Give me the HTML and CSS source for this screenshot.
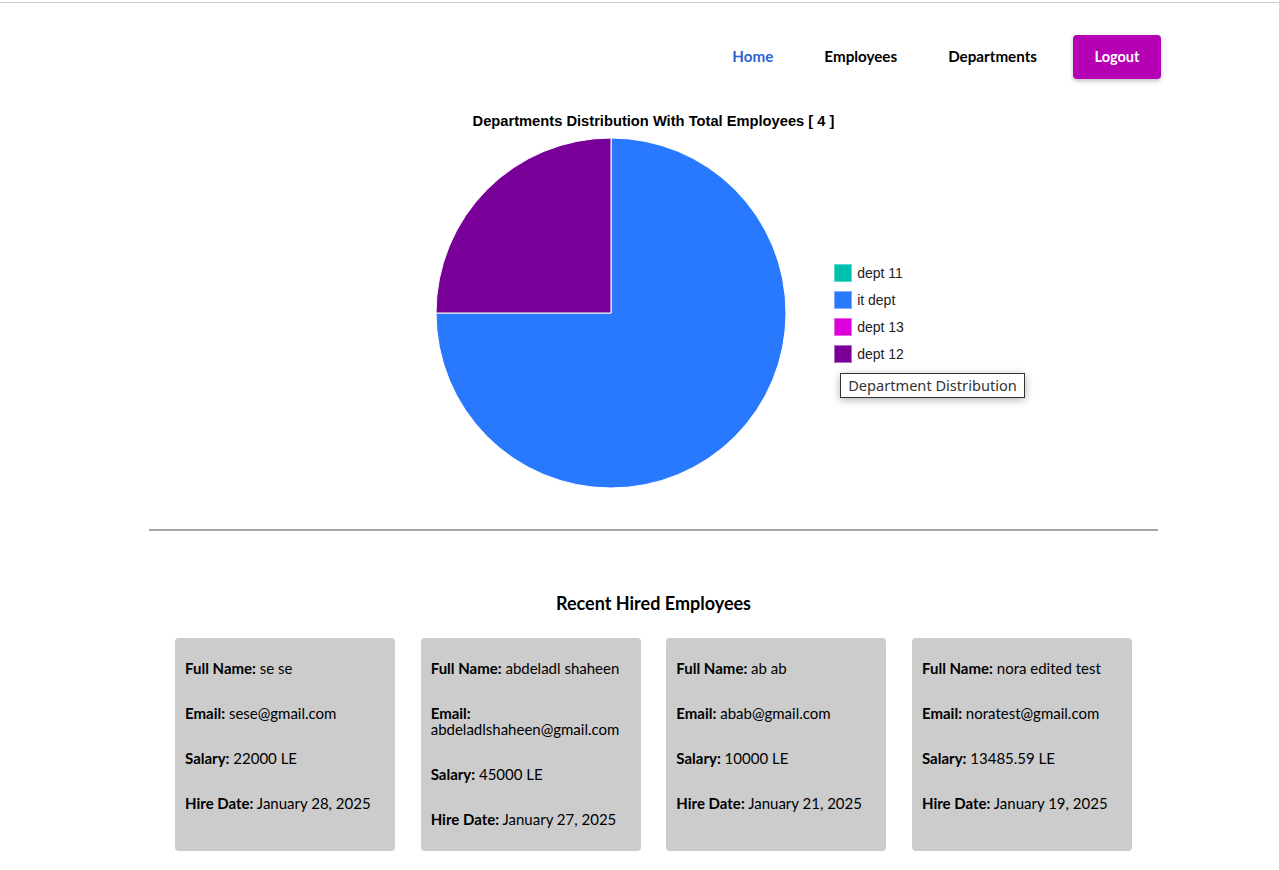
FILE: index.html
```html
<!DOCTYPE html>
<html>
<head>
<meta charset="utf-8">
<link rel="stylesheet" href="styles.css">
</head>
<body>
<div class="topline"></div>
<nav class="nav">
  <a class="nav-link active">Home</a>
  <a class="nav-link">Employees</a>
  <a class="nav-link">Departments</a>
  <button class="logout">Logout</button>
</nav>
<main class="page">
  <section class="chart">
    <h2 class="chart-title">Departments Distribution With Total Employees [ 4 ]</h2>
    <div class="chart-body">
      <svg class="pie" width="352" height="352" viewBox="0 0 352 352">
        <path d="M176,176 L176,1 A175,175 0 1,1 1,176 Z" fill="#2979ff" stroke="#ffffff" stroke-width="1"/>
        <path d="M176,176 L1,176 A175,175 0 0,1 176,1 Z" fill="#780099" stroke="#ffffff" stroke-width="1"/>
      </svg>
      <div class="legend">
        <div class="legend-item"><span class="swatch teal"></span>dept 11</div>
        <div class="legend-item"><span class="swatch blue"></span>it dept</div>
        <div class="legend-item"><span class="swatch magenta"></span>dept 13</div>
        <div class="legend-item"><span class="swatch purple"></span>dept 12</div>
        <div class="tooltip">Department Distribution</div>
      </div>
    </div>
  </section>
  <hr class="divider">
  <section class="recent">
    <h3 class="recent-title">Recent Hired Employees</h3>
    <div class="cards">
      <div class="card">
        <p><b>Full Name:</b> se se</p>
        <p><b>Email:</b> sese@gmail.com</p>
        <p><b>Salary:</b> 22000 LE</p>
        <p><b>Hire Date:</b> January 28, 2025</p>
      </div>
      <div class="card">
        <p><b>Full Name:</b> abdeladl shaheen</p>
        <p><b>Email:</b> abdeladlshaheen@gmail.com</p>
        <p><b>Salary:</b> 45000 LE</p>
        <p><b>Hire Date:</b> January 27, 2025</p>
      </div>
      <div class="card">
        <p><b>Full Name:</b> ab ab</p>
        <p><b>Email:</b> abab@gmail.com</p>
        <p><b>Salary:</b> 10000 LE</p>
        <p><b>Hire Date:</b> January 21, 2025</p>
      </div>
      <div class="card">
        <p><b>Full Name:</b> nora edited test</p>
        <p><b>Email:</b> noratest@gmail.com</p>
        <p><b>Salary:</b> 13485.59 LE</p>
        <p><b>Hire Date:</b> January 19, 2025</p>
      </div>
    </div>
  </section>
</main>
</body>
</html>
```

FILE: styles.css
```css
* { box-sizing: border-box; }
html, body { margin: 0; padding: 0; background: #fff; }
body {
  font-family: "Lato", "Noto Sans", sans-serif;
  color: #000;
  padding-top: 2px;
}
.topline { height: 1px; background: #cccccc; }
.nav {
  display: flex;
  justify-content: flex-end;
  align-items: center;
  padding: 32px 118px 0 0;
  height: 76px;
}
.nav-link {
  font-size: 15.2px;
  font-weight: 700;
  line-height: 18px;
  margin-top: -2px;
  color: #000;
  margin-right: 51px;
  text-decoration: none;
}
.nav-link:nth-child(3) { margin-right: 36px; }
.nav-link.active { color: #2f62d0; }
.logout {
  width: 88px;
  height: 44px;
  border: none;
  border-radius: 4px;
  background: #b500b3;
  color: #fff;
  font-family: inherit;
  font-size: 14.5px;
  font-weight: 700;
  padding: 0 0 2px;
  box-shadow: 0 2px 4px rgba(0,0,0,0.25);
}
.page {
  width: 1279px;
  padding: 0 121px 0 149px;
}
.chart {
  display: flex;
  flex-direction: column;
  align-items: center;
}
.chart-title {
  margin: 34px 0 0;
  font-family: "Liberation Sans", Arial, sans-serif;
  font-size: 14.7px;
  font-weight: 700;
  line-height: 17px;
}
.chart-body {
  display: flex;
  align-items: center;
  margin-top: 7px;
  margin-left: 32px;
}
.pie { display: block; }
.legend {
  position: relative;
  margin-left: 47px;
  display: flex;
  flex-direction: column;
  gap: 9px;
  font-family: "Liberation Sans", Arial, sans-serif;
  font-size: 14px;
  color: #222;
}
.legend-item {
  display: flex;
  align-items: center;
  height: 18px;
  white-space: nowrap;
}
.swatch {
  width: 18px;
  height: 18px;
  margin-right: 5px;
  border: 1px solid;
}
.teal { background: #00bfae; border-color: #5fd8cf; }
.blue { background: #2979ff; border-color: #7aacff; }
.magenta { background: #dd00dd; border-color: #e866e8; }
.purple { background: #780099; border-color: #b070c5; }
.tooltip {
  position: absolute;
  top: 109px;
  left: 6px;
  white-space: nowrap;
  background: #fff;
  border: 1px solid #333;
  padding: 2px 7px 3px;
  font-family: "Noto Sans", sans-serif;
  font-size: 14.6px;
  line-height: 18px;
  color: #333;
  box-shadow: 0 2px 8px rgba(0,0,0,0.3);
}
.divider {
  margin: 40px 0 0;
  border: none;
  border-top: 2px solid #a5a5a5;
}
.recent {
  display: flex;
  flex-direction: column;
  align-items: center;
}
.recent-title {
  margin: 62px 0 0;
  font-size: 18px;
  font-weight: 700;
  line-height: 20px;
}
.cards {
  display: flex;
  gap: 25.67px;
  margin-top: 25px;
  margin-bottom: 20px;
}
.card {
  width: 220px;
  background: #cccccc;
  border-radius: 4px;
  padding: 22px 10px 24px;
  display: flex;
  flex-direction: column;
  gap: 29px;
  font-size: 15px;
  line-height: 16px;
}
.card p { margin: 0; }
.card b { font-weight: 700; }
```
